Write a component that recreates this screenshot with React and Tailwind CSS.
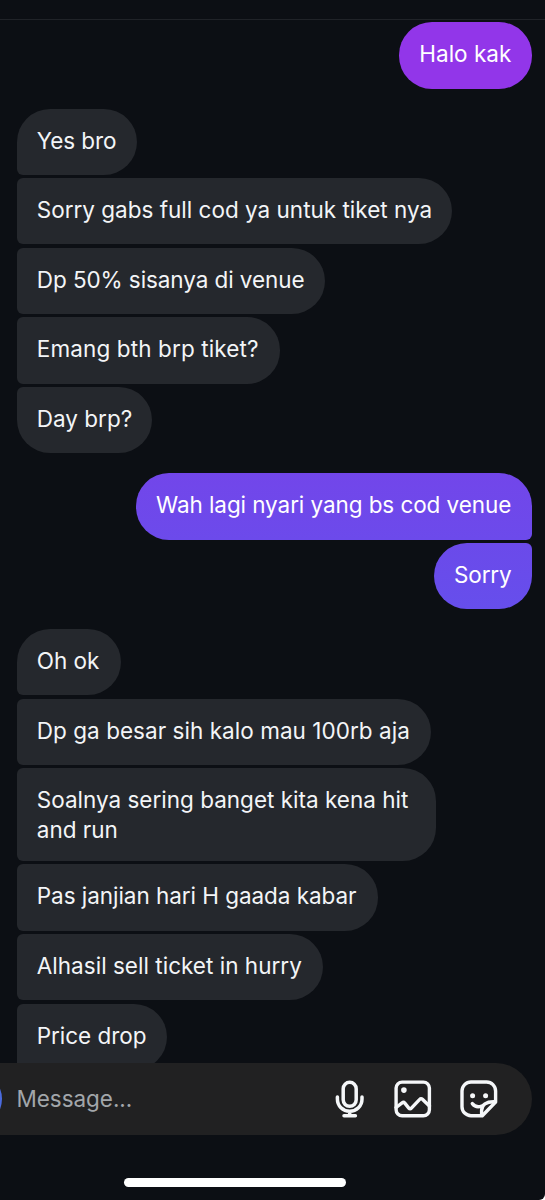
const threads = [
  {
    mine: true,
    messages: [{ text: "Halo kak", shape: "w-[132.7px] rounded-[33px] bg-[#9236e9]", spacing: "tracking-[0px]" }],
  },
  {
    messages: [
      { text: "Yes bro", shape: "w-[120.7px] rounded-tl-[33px] rounded-bl-[6px] rounded-r-[33px]", spacing: "tracking-[-0.1px]" },
      { text: "Sorry gabs full cod ya untuk tiket nya", shape: "w-[435.4px] rounded-l-[6px] rounded-r-[33px]", spacing: "tracking-[0px]" },
      { text: "Dp 50% sisanya di venue", shape: "w-[308px] rounded-l-[6px] rounded-r-[33px]", spacing: "tracking-[-0.08px]" },
      { text: "Emang bth brp tiket?", shape: "w-[263.3px] rounded-l-[6px] rounded-r-[33px]", spacing: "tracking-[0.12px]" },
      { text: "Day brp?", shape: "w-[135.7px] rounded-tl-[6px] rounded-bl-[33px] rounded-r-[33px]", spacing: "tracking-[0px]" },
    ],
  },
  {
    mine: true,
    messages: [
      { text: "Wah lagi nyari yang bs cod venue", shape: "w-[396px] rounded-l-[33px] rounded-tr-[33px] rounded-br-[6px] bg-linear-to-b from-[#7246ea] to-[#6c4aeb]", spacing: "tracking-[-0.08px]" },
      { text: "Sorry", shape: "w-[98px] rounded-l-[33px] rounded-tr-[6px] rounded-br-[33px] bg-linear-to-b from-[#6b4aea] to-[#664eec]", spacing: "tracking-[-0.15px]" },
    ],
  },
  {
    messages: [
      { text: "Oh ok", shape: "w-[104.3px] rounded-tl-[33px] rounded-bl-[6px] rounded-r-[33px]", spacing: "tracking-[0px]" },
      { text: "Dp ga besar sih kalo mau 100rb aja", shape: "w-[414px] rounded-l-[6px] rounded-r-[33px]", spacing: "tracking-[0.04px]" },
      { text: "Soalnya sering banget kita kena hit\nand run", tall: true, shape: "w-[419px] rounded-l-[6px] rounded-r-[33px]", spacing: "tracking-[0px]" },
      { text: "Pas janjian hari H gaada kabar", shape: "w-[361px] rounded-l-[6px] rounded-r-[33px]", spacing: "tracking-[-0.05px]" },
      { text: "Alhasil sell ticket in hurry", shape: "w-[306.3px] rounded-l-[6px] rounded-r-[33px]", spacing: "tracking-[0.02px]" },
      { text: "Price drop", shape: "w-[150.3px] rounded-l-[6px] rounded-r-[33px]", spacing: "tracking-[-0.05px]" },
    ],
  },
];

function Bubble({ message, mine }) {
  return (
    <div
      className={`shrink-0 pt-[17.1px] text-[22.5px] leading-[30px] whitespace-pre ${
        message.tall ? "h-[92.7px]" : "h-[66.3px]"
      } ${mine ? "pl-5 text-white" : "pl-[20.2px] bg-[#25282d] text-[#f3f5f7]"} ${message.shape} ${message.spacing}`}
    >
      {message.text}
    </div>
  );
}

function MicIcon() {
  return (
    <svg width="30" height="38" viewBox="0 0 30 38" fill="none" stroke="currentColor" strokeWidth="3.5" strokeLinecap="round" strokeLinejoin="round">
      <rect x="8.2" y="2.3" width="13" height="24" rx="6.5" />
      <path d="M2.4 17v2c0 7 5.4 12.3 12.3 12.3S27 26 27 19v-2M14.7 31.3v4.5M9 35.8h11.4" />
    </svg>
  );
}

function GalleryIcon() {
  return (
    <svg width="38" height="38" viewBox="0 0 38 38" fill="none" stroke="currentColor" strokeWidth="3.4" strokeLinecap="round" strokeLinejoin="round">
      <rect x="2.1" y="2.1" width="33.3" height="33.6" rx="6" />
      <path d="M2.1 27.500l6-4.600c1-.8 1.900-.7 2.700.2l4 5c.8 1 1.700 1 2.600 0l8.300-8.700c.9-1 1.800-1 2.700-.1l7 6.700" />
      <circle cx="9.9" cy="10.1" r="2.8" fill="currentColor" stroke="none" />
    </svg>
  );
}

function StickerIcon() {
  return (
    <svg width="38" height="38" viewBox="0 0 38 38" fill="none" stroke="currentColor" strokeWidth="3.4" strokeLinecap="round" strokeLinejoin="round">
      <path d="M22.3 35.7H11a9 9 0 0 1-9-9V11a9 9 0 0 1 9-9h15.6a9 9 0 0 1 9 9v11L22.3 35.7z" />
      <path d="M21.600 35V30.500c0-5.500 4.500-9.200 13.400-8.700M12.300 23.600c2.200 2.800 6 3.700 9.400 2.400" />
      <circle cx="12.6" cy="15.7" r="2.5" fill="currentColor" stroke="none" />
      <circle cx="25.6" cy="15.7" r="2.5" fill="currentColor" stroke="none" />
    </svg>
  );
}

export default function App() {
  return (
    <div className="bg-white">
      <div className="flex h-[1200px] w-[545px] flex-col overflow-hidden rounded-br-[6px] bg-[#0c0f14] font-['Inter',sans-serif]">
        <div className="h-5 shrink-0 border-b border-[#202328]" />

        {/* Conversation */}
        <div className="flex h-[1042.5px] shrink-0 flex-col gap-5 overflow-hidden pt-[2.3px] pr-[13px] pl-[16.6px]">
          {threads.map((thread, i) => (
            <div key={i} className={`flex shrink-0 flex-col gap-[3.3px] ${thread.mine ? "items-end" : "items-start"}`}>
              {thread.messages.map((message) => (
                <Bubble key={message.text} message={message} mine={thread.mine} />
              ))}
            </div>
          ))}
        </div>

        {/* Composer */}
        <div className="mr-[13px] flex h-[72.5px] shrink-0 items-center rounded-r-full bg-[#212122] text-[#f5f7f9]">
          <div className="-ml-[54px] size-14 shrink-0 rounded-full bg-[#4b6be0]" />
          <div className="ml-[14.5px] flex-1 text-[22.5px] leading-[30px] tracking-[-0.05px] text-[#a2a6aa]">Message...</div>
          <div className="flex items-center pr-[34px]">
            <MicIcon />
            <div className="ml-[28.7px]">
              <GalleryIcon />
            </div>
            <div className="ml-[28.3px]">
              <StickerIcon />
            </div>
          </div>
        </div>

        {/* Home indicator */}
        <div className="flex flex-1 justify-center pt-[43px] pr-[76px]">
          <div className="h-[9px] w-[222px] rounded-full bg-white" />
        </div>
      </div>
    </div>
  );
}
